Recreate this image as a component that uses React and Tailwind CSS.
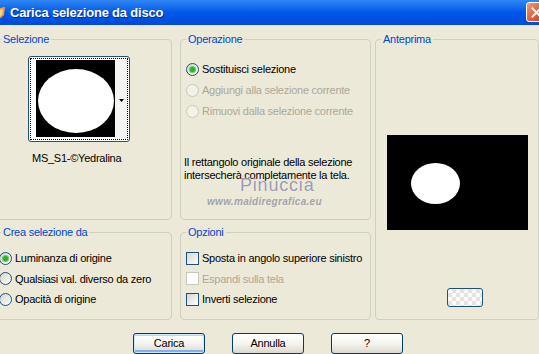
import React from 'react';

const radioOn = 'w-[13px] h-[13px] rounded-full border border-[#1c5180] bg-linear-to-br from-[#d6d4c8] to-white flex items-center justify-center shrink-0';
const radioOff = 'w-[13px] h-[13px] rounded-full border border-[#cac8bb] bg-[#f3f2ea] shrink-0';
const checkOn = 'w-[13px] h-[13px] border border-[#1c5180] bg-linear-to-br from-[#d8d6cc] to-white shrink-0';
const checkOff = 'w-[13px] h-[13px] border border-[#cac8bb] bg-white shrink-0';

function Radio({ checked, disabled }) {
  return (
    <span className={disabled ? radioOff : radioOn}>
      {checked && <span className="w-[5px] h-[5px] rounded-full bg-[#2fb12f] shadow-[0_0_0_1px_#5fd35f]" />}
    </span>
  );
}

function Group({ title, className, children }) {
  return (
    <fieldset className={`border border-[#d0d0bf] rounded-[4px] min-w-0 ${className}`}>
      <legend className="ml-[5px] px-[2px] leading-[13px] text-[#0046d5]">{title}</legend>
      {children}
    </fieldset>
  );
}

function Row({ children, disabled }) {
  return (
    <div className={`flex items-center gap-[3px] h-[21px] whitespace-nowrap ${disabled ? 'text-[#aca899]' : 'text-black'}`}>
      {children}
    </div>
  );
}

function Button({ label, primary }) {
  return (
    <button
      className={`w-[72px] h-[21px] rounded-[3px] border border-[#003c74] bg-linear-to-b from-white via-[#f4f4f0] to-[#dcd8cc] text-black leading-none ${
        primary ? 'shadow-[inset_0_0_0_1px_#cee7ff,inset_0_-2px_0_1px_#89ade4,inset_0_2px_0_0_#bcd4f6]' : ''
      }`}
    >
      {label}
    </button>
  );
}

export default function App() {
  return (
    <div className="w-[539px] h-[354px] overflow-hidden bg-[#ece9d8] font-['Liberation_Sans',Arial,sans-serif] text-[11px] tracking-[-0.25px] text-black">
      {/* title bar */}
      <div className="h-[25px] flex items-center bg-linear-to-b from-[#2f86f5] via-[#0058e8] to-[#004ad8] relative">
        <svg width="6" height="14" viewBox="0 0 6 14" className="shrink-0">
          <path d="M0 2 L5 1 L4 9 L1 12 L0 12 Z" fill="#e8a040" />
          <path d="M0 4 L3 3 L2 9 L0 10 Z" fill="#f6d67a" />
        </svg>
        <span className="ml-[4px] font-bold text-[13px] text-white [text-shadow:1px_1px_#0a2c8f] tracking-[-0.2px]">
          Carica selezione da disco
        </span>
        <div className="absolute left-[526px] top-[2px] w-[21px] h-[20px] rounded-[3px] border border-white bg-linear-to-br from-[#f09a7e] via-[#e2603f] to-[#c2391b] flex items-center justify-center">
          <svg width="11" height="11" viewBox="0 0 11 11">
            <path d="M1.5 1.5 L9.5 9.5 M9.5 1.5 L1.5 9.5" stroke="white" strokeWidth="2" strokeLinecap="square" />
          </svg>
        </div>
      </div>

      {/* groups */}
      <div className="flex ml-[-5px] mt-[8px]">
        <div className="grid grid-cols-[177px_191px] grid-rows-[187px_94px] gap-x-[8px] gap-y-[6px]">
          <Group title="Selezione" className="h-[187px]">
            <div className="ml-[32px] mt-[10px] w-[102px] h-[86px] rounded-[3px] border border-[#1c5180] bg-white p-px">
              <div className="w-full h-full border border-dotted border-black flex">
                <div className="ml-[5px] mt-px w-[79px] h-[77px] bg-black pt-[9px]">
                  <div className="mx-auto w-[76px] h-[64px] rounded-[50%] bg-white" />
                </div>
                <div className="flex-1 bg-[#f4f4f2] flex items-center justify-center">
                  <svg width="5" height="3" viewBox="0 0 5 3" className="mt-[2px] ml-[1px]">
                    <path d="M0 0 H5 L2.5 3 Z" fill="black" />
                  </svg>
                </div>
              </div>
            </div>
            <div className="ml-[36px] mt-[10px] leading-[13px]">MS_S1-©Yedralina</div>
          </Group>

          <Group title="Operazione" className="h-[187px]">
            <div className="ml-[5px] mt-[13px]">
              <Row>
                <Radio checked />
                <span>Sostituisci selezione</span>
              </Row>
              <Row disabled>
                <Radio disabled />
                <span>Aggiungi alla selezione corrente</span>
              </Row>
              <Row disabled>
                <Radio disabled />
                <span>Rimuovi dalla selezione corrente</span>
              </Row>
            </div>
            <div className="relative ml-[3px] mt-[34px] leading-[13px]">
              <p>Il rettangolo originale della selezione</p>
              <p>intersecherà completamente la tela.</p>
              <span className="absolute left-[56px] top-[21px] text-[18px] leading-[17px] text-[#8c8cab]/90 [text-shadow:0_0_1px_white] tracking-[0.8px]">
                Pinuccia
              </span>
              <span className="absolute left-[23px] top-[40px] text-[10px] leading-[11px] italic font-bold text-[#9a9aa8]/90 tracking-[0.3px]">
                www.maidiregrafica.eu
              </span>
            </div>
          </Group>

          <Group title="Crea selezione da" className="h-[94px]">
            <div className="ml-[3px] mt-[9px] [&>div]:h-[20.5px]">
              <Row>
                <Radio checked />
                <span>Luminanza di origine</span>
              </Row>
              <Row>
                <Radio />
                <span>Qualsiasi val. diverso da zero</span>
              </Row>
              <Row>
                <Radio />
                <span>Opacità di origine</span>
              </Row>
            </div>
          </Group>

          <Group title="Opzioni" className="h-[94px]">
            <div className="ml-[5px] mt-[9px] [&>div]:h-[20.5px]">
              <Row>
                <span className={checkOn} />
                <span>Sposta in angolo superiore sinistro</span>
              </Row>
              <Row disabled>
                <span className={checkOff} />
                <span>Espandi sulla tela</span>
              </Row>
              <Row>
                <span className={checkOn} />
                <span>Inverti selezione</span>
              </Row>
            </div>
          </Group>
        </div>

        <Group title="Anteprima" className="ml-[4px] w-[180px] h-[287px]">
          <div className="ml-[11px] mt-[89px] w-[141px] h-[95px] bg-black pt-[28px] pl-[24px]">
            <div className="w-[49px] h-[41px] rounded-[50%] bg-white" />
          </div>
          <div className="ml-[71px] mt-[58px] w-[36px] h-[19px] rounded-[3px] border border-[#1c5180] bg-[repeating-conic-gradient(#e4e4e0_0_25%,#fbfbfa_0_50%)] bg-[length:8px_8px]" />
        </Group>
      </div>

      {/* buttons */}
      <div className="flex gap-[27px] pl-[133px] mt-[13px]">
        <Button label="Carica" primary />
        <Button label="Annulla" />
        <Button label="?" />
      </div>
    </div>
  );
}
